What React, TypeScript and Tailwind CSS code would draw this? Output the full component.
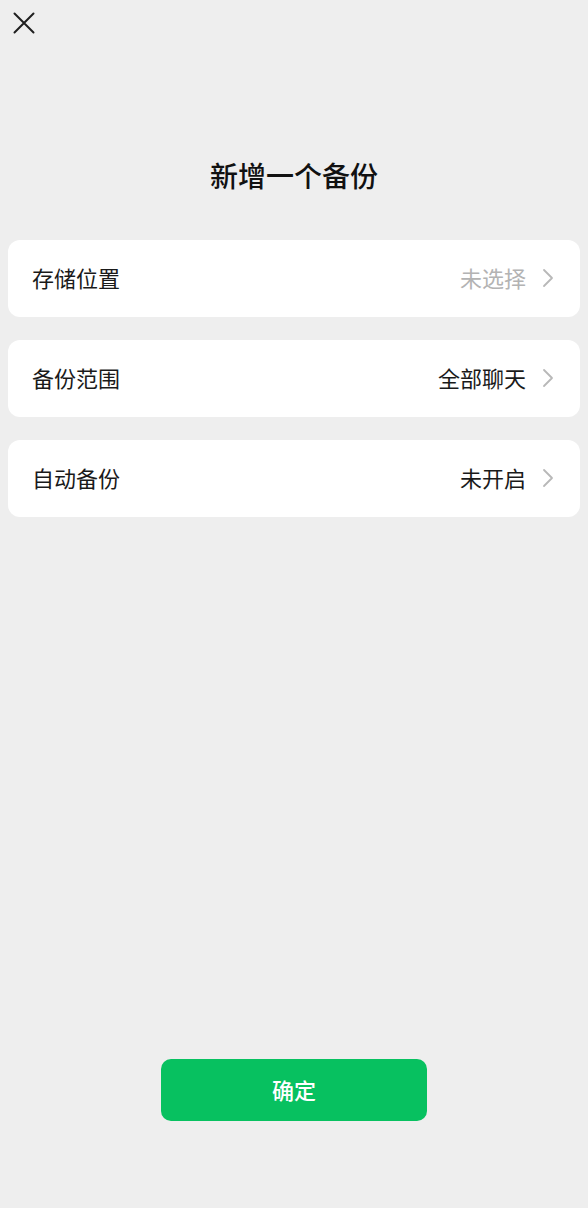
import React from "react";

const font = { fontFamily: '"Noto Sans CJK SC", "Noto Sans", sans-serif' };

function Chevron() {
  return (
    <svg width="12" height="20" viewBox="0 0 12 20" fill="none" className="ml-[16px]">
      <path d="M2 2 L10 10 L2 18" stroke="#b8b8b8" strokeWidth="1.8" strokeLinecap="round" strokeLinejoin="round" />
    </svg>
  );
}

function Row({ label, value, muted }: { label: string; value: string; muted?: boolean }) {
  return (
    <div className="flex h-[77px] items-center justify-between rounded-[12px] bg-white pb-[2px] pl-[24px] pr-[26px]">
      <span className="text-[22px] text-[#1a1a1a]">{label}</span>
      <div className="flex items-center">
        <span className={muted ? "text-[22px] text-[#b3b3b3]" : "text-[22px] text-[#1a1a1a]"}>{value}</span>
        <Chevron />
      </div>
    </div>
  );
}

export default function App() {
  return (
    <div className="flex h-[1208px] w-[588px] flex-col bg-[#eeeeee]" style={font}>
      <div className="flex h-[46px] items-center pl-[13px] pt-[0px]">
        <svg width="22" height="22" viewBox="0 0 22 22" fill="none">
          <path d="M1.5 1.5 L20.5 20.5 M20.5 1.5 L1.5 20.5" stroke="#1f1f1f" strokeWidth="2" strokeLinecap="round" />
        </svg>
      </div>
      <div className="mt-[109px] text-center text-[28px] font-medium leading-[40px] text-[#111]">新增一个备份</div>
      <div className="mt-[45px] flex flex-col gap-[23px] px-[8px]">
        <Row label="存储位置" value="未选择" muted />
        <Row label="备份范围" value="全部聊天" />
        <Row label="自动备份" value="未开启" />
      </div>
      <div className="flex-1" />
      <div className="mb-[87px] flex justify-center">
        <button className="flex h-[62px] w-[266px] items-center justify-center rounded-[10px] bg-[#07c160] pb-[2px] text-[22px] font-medium text-white">
          确定
        </button>
      </div>
    </div>
  );
}
